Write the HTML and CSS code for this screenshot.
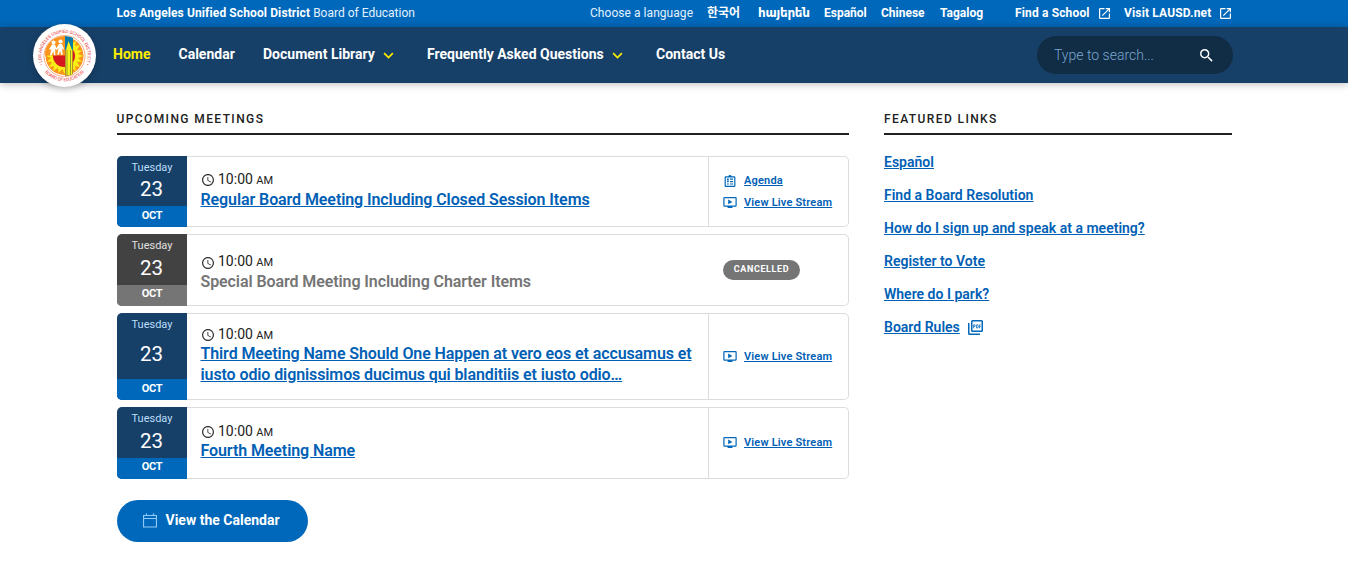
FILE: index.html
```html
<!DOCTYPE html>
<html lang="en">
<head>
<meta charset="utf-8">
<title>LAUSD Board of Education</title>
<link rel="stylesheet" href="styles.css">
</head>
<body>
<svg class="defs" aria-hidden="true">
  <symbol id="external" viewBox="3 3 18 18"><path d="M19 19H5V5h7V3H5a2 2 0 0 0-2 2v14a2 2 0 0 0 2 2h14c1.100 0 2-.9 2-2v-7h-2v7zM14 3v2h3.590l-9.830 9.830 1.410 1.410L19 6.410V10h2V3h-7z"/></symbol>
  <symbol id="chevron" viewBox="0 0 12 8"><path d="M1 1.300l5 5 5-5" fill="none" stroke="currentColor" stroke-width="1.900"/></symbol>
  <symbol id="clock" viewBox="2 2 20 20"><path d="M11.990 2C6.470 2 2 6.480 2 12s4.470 10 9.990 10C17.520 22 22 17.520 22 12S17.520 2 11.990 2zM12 20a8 8 0 1 1 0-16 8 8 0 0 1 0 16zm.5-13H11v6l5.250 3.150.75-1.230-4.500-2.670z"/></symbol>
  <symbol id="video" viewBox="1 3 22 18"><path d="M21 3H3a2 2 0 0 0-2 2v12a2 2 0 0 0 2 2h5v2h8v-2h5c1.100 0 2-.9 2-2V5a2 2 0 0 0-2-2zm0 14H3V5h18v12zm-5-6l-7 4V7z"/></symbol>
  <symbol id="agenda" viewBox="3 1 18 20"><path d="M19 3h-4.180a3 3 0 0 0-5.640 0H5a2 2 0 0 0-2 2v14a2 2 0 0 0 2 2h14a2 2 0 0 0 2-2V5a2 2 0 0 0-2-2zm0 16H5V5h14v14zM7 7h3v3H7zm5 0h5v2h-5zM7 11h3v2H7zm5 0h5v2h-5zM7 15h3v2H7zm5 0h5v2h-5z" fill-rule="evenodd"/></symbol>
  <symbol id="search" viewBox="3 3 18 18"><path d="M15.500 14h-.79l-.28-.27A6.471 6.471 0 0 0 16 9.500 6.500 6.500 0 1 0 9.500 16c1.610 0 3.090-.59 4.230-1.570l.27.28v.79l5 4.990L20.490 19l-4.990-5zm-6 0C7.010 14 5 11.990 5 9.500S7.010 5 9.500 5 14 7.010 14 9.500 11.990 14 9.500 14z"/></symbol>
  <symbol id="pdf" viewBox="2 2 20 20"><path d="M20 2H8a2 2 0 0 0-2 2v12a2 2 0 0 0 2 2h12a2 2 0 0 0 2-2V4a2 2 0 0 0-2-2zm0 14H8V4h12v12zM4 6H2v14a2 2 0 0 0 2 2h14v-2H4V6zm12 6V9a1 1 0 0 0-1-1h-2v5h2a1 1 0 0 0 1-1zm-2-3h1v3h-1V9zm4 2h1v-1h-1V9h1V8h-2v5h1zm-8 0h1a1 1 0 0 0 1-1V9a1 1 0 0 0-1-1H9v5h1v-2zm0-2h1v1h-1V9z"/></symbol>
  <symbol id="calendar" viewBox="0 0 14 15"><path d="M.5 2.500h13v11.500H.5zM.5 5.500h13M3.500 .5v2M10.500 .5v2" fill="none" stroke="currentColor" stroke-width="1.200"/></symbol>
</svg>

<header>
  <div class="topbar">
    <div class="brand"><b>Los Angeles Unified School District</b> Board of Education</div>
    <div class="choose">Choose a language</div>
    <a class="lang ko" lang="ko">한국어</a>
    <a class="lang hy" lang="hy">հայերեն</a>
    <a class="lang es">Español</a>
    <a class="lang zh">Chinese</a>
    <a class="lang tl">Tagalog</a>
    <a class="lang school">Find a School <svg><use href="#external"/></svg></a>
    <a class="lang visit">Visit LAUSD.net <svg><use href="#external"/></svg></a>
  </div>
  <nav class="mainnav">
    <a class="logo" aria-label="Los Angeles Unified School District Board of Education">
      <svg viewBox="0 0 63 63">
        <defs>
          <path id="arc-top" d="M10.900 42.500A23.100 23.100 0 1 1 52.100 42.500"/>
          <path id="arc-bottom" d="M8.900 43.800A25.800 25.800 0 0 0 54.100 43.800"/>
          <clipPath id="seal"><circle cx="31.500" cy="32" r="20"/></clipPath>
        </defs>
        <g class="ring-text">
          <text><textPath href="#arc-top" startOffset="50%" text-anchor="middle" textLength="90">• LOS ANGELES UNIFIED SCHOOL DISTRICT •</textPath></text>
          <text><textPath href="#arc-bottom" startOffset="50%" text-anchor="middle" textLength="45">BOARD OF EDUCATION</textPath></text>
        </g>
        <circle cx="31.500" cy="32" r="20.500" fill="#fff" stroke="#f59a65" stroke-width=".8"/>
        <circle cx="31.500" cy="32" r="19" fill="#fa941c"/>
        <g clip-path="url(#seal)">
          <path d="M31.500 14l2 5 4-4 .5 5 5-3-1 5 5-1-3 5 5 .5-4 3.500 5 2-5 2 4 3.500-5 .5 3 5-5-1 1 5-5-3-.5 5-4-4-2 5-2-5-4 4-.5-5-5 3 1-5-5 1 3-5-5-.5 4-3.500-5-2 5-2-4-3.500 5-.5-3-5 5 1-1-5 5 3 .5-5 4 4z" fill="#f8ef16"/>
          <circle cx="31" cy="32" r="11" fill="#d6181f"/>
          <path d="M12 12h20v19.500H12z" fill="#fa941c"/>
          <path d="M32 11h8v15h-8z" fill="#087ba7"/>
          <path d="M32 26h8v27h-8z" fill="#b58b2c"/>
          <path d="M33 26l2.500-9L39 26v25h-6z" fill="#f8f31b"/>
          <path d="M34 26v25M37.500 26v25" stroke="#7a8b2d" stroke-width=".8"/>
          <g fill="#fff"><circle cx="20.500" cy="18.500" r="2"/><circle cx="27.500" cy="17.500" r="2.100"/><path d="M19 20.500h3l2 5-1 .7-1-2 .5 7h-1.500l-.7-4-1.700 4h-1.700l1.500-6.500-1.400 1.300-.8-1zM26 20h3l2 5-1 .7-1-2 .7 7H28l-.8-4-1.500 4h-1.500l1.400-7-1.500 2-1-.6z"/></g>
        </g>
      </svg>
    </a>
    <a class="item home">Home</a>
    <a class="item cal">Calendar</a>
    <a class="item doc">Document Library <svg><use href="#chevron"/></svg></a>
    <a class="item faq">Frequently Asked Questions <svg><use href="#chevron"/></svg></a>
    <a class="item contact">Contact Us</a>
    <div class="search"><span>Type to search...</span><svg><use href="#search"/></svg></div>
  </nav>
</header>

<main>
  <section class="meetings">
    <h2>Upcoming Meetings</h2>
    <article class="meeting first">
      <div class="date"><span class="day">Tuesday</span><span class="num">23</span><span class="month">OCT</span></div>
      <div class="info"><div class="time"><svg><use href="#clock"/></svg>10:00 <small>AM</small></div><a class="title">Regular Board Meeting Including Closed Session Items</a></div>
      <div class="actions"><a><svg class="agenda"><use href="#agenda"/></svg><span>Agenda</span></a><a><svg><use href="#video"/></svg><span>View Live Stream</span></a></div>
    </article>
    <article class="meeting cancelled">
      <div class="date"><span class="day">Tuesday</span><span class="num">23</span><span class="month">OCT</span></div>
      <div class="info"><div class="time"><svg><use href="#clock"/></svg>10:00 <small>AM</small></div><span class="title">Special Board Meeting Including Charter Items</span></div>
      <div class="actions"><span class="badge">CANCELLED</span></div>
    </article>
    <article class="meeting tall">
      <div class="date"><span class="day">Tuesday</span><span class="num">23</span><span class="month">OCT</span></div>
      <div class="info"><div class="time"><svg><use href="#clock"/></svg>10:00 <small>AM</small></div><a class="title">Third Meeting Name Should One Happen at vero eos et accusamus et<br>iusto odio dignissimos ducimus qui blanditiis et iusto odio…</a></div>
      <div class="actions"><a><svg><use href="#video"/></svg><span>View Live Stream</span></a></div>
    </article>
    <article class="meeting last">
      <div class="date"><span class="day">Tuesday</span><span class="num">23</span><span class="month">OCT</span></div>
      <div class="info"><div class="time"><svg><use href="#clock"/></svg>10:00 <small>AM</small></div><a class="title">Fourth Meeting Name</a></div>
      <div class="actions"><a><svg><use href="#video"/></svg><span>View Live Stream</span></a></div>
    </article>
    <a class="button"><svg><use href="#calendar"/></svg>View the Calendar</a>
  </section>
  <aside class="links">
    <h2>Featured Links</h2>
    <ul>
      <li><a>Español</a></li>
      <li><a>Find a Board Resolution</a></li>
      <li><a>How do I sign up and speak at a meeting?</a></li>
      <li><a>Register to Vote</a></li>
      <li><a>Where do I park?</a></li>
      <li><a>Board Rules</a><svg><use href="#pdf"/></svg></li>
    </ul>
  </aside>
</main>
</body>
</html>
```
FILE: styles.css
```css
* { box-sizing: border-box; }
body {
  margin: 0;
  height: 562px;
  overflow: hidden;
  background: #fff;
  color: #212121;
  font-family: Roboto, "Noto Sans CJK KR", "DejaVu Sans", sans-serif;
}
svg { fill: currentColor; flex: none; overflow: visible; }
.defs { display: none; }

header { color: #fff; }
.topbar {
  display: flex;
  align-items: center;
  height: 27px;
  padding: 0 116px 1px 116.5px;
  background: #0068bb;
  font-size: 12px;
  line-height: 16px;
  white-space: nowrap;
}
.brand { width: 473.5px; color: #e3f2fd; }
.brand b { color: #fff; letter-spacing: .11px; }
.choose { width: 117px; color: #e3f2fd; letter-spacing: .05px; }
.lang { display: flex; align-items: center; flex: none; font-weight: 700; }
.lang svg { width: 11px; height: 11px; }
.ko { width: 51px; }
.hy { width: 66px; letter-spacing: -.25px; }
.es { width: 57px; }
.zh { width: 59px; }
.tl { width: 75px; }
.school, .visit { letter-spacing: .15px; }
.school { width: 109px; gap: 9px; }
.visit { gap: 9px; }

.mainnav {
  position: relative;
  display: flex;
  align-items: center;
  height: 56px;
  padding: 0 115px 0 113px;
  background: #174068;
  box-shadow: 0 1px 8px rgba(0, 0, 0, .28);
  font-size: 14px;
  white-space: nowrap;
}
.logo {
  position: absolute;
  left: 33px;
  top: -3px;
  width: 63px;
  height: 63px;
  border-radius: 50%;
  background: #fff;
  box-shadow: 0 2px 6px rgba(0, 0, 0, .25);
}
.logo svg { display: block; width: 63px; height: 63px; }
.ring-text { fill: #e8403c; font-size: 4.6px; }
.item { flex: none; display: flex; align-items: center; font-weight: 700; line-height: 20px; padding-bottom: 3px; }
.item svg { width: 11px; height: 7px; margin: 4px 0 0 8px; color: #ffee00; }
.home { width: 65.5px; color: #ffee00; }
.cal { width: 84.5px; }
.doc { width: 164px; }
.faq { width: 229px; }
.search {
  display: flex;
  align-items: center;
  justify-content: space-between;
  width: 196px;
  height: 38px;
  margin-left: auto;
  padding: 0 20px 0 17px;
  border-radius: 19px;
  background: #112c45;
}
.search span { color: #7ba7cf; font-weight: 300; }
.search svg { width: 13px; height: 13px; }

main { display: flex; gap: 35px; padding: 28px 116px 0; }
.meetings { width: 733px; }
.links { width: 348px; }
h2 {
  height: 24px;
  margin: 0 0 21px;
  border-bottom: 2px solid #212121;
  font-size: 12px;
  font-weight: 500;
  line-height: 16px;
  letter-spacing: 1.4px;
  text-transform: uppercase;
}
.meetings h2 { margin-left: 1px; text-indent: -.5px; }
.meeting {
  display: flex;
  width: 732px;
  height: 72px;
  margin: 0 0 7px 1px;
  border: 1px solid #dcdcdc;
  border-left: 0;
  border-radius: 5px;
}
.meeting.first { height: 71px; }
.meeting.tall { height: 87px; }
.date {
  display: flex;
  flex-direction: column;
  width: 70px;
  margin: -1px 0;
  border-radius: 5px 0 0 5px;
  overflow: hidden;
  background: #174068;
  color: #fff;
  text-align: center;
}
.day { color: #bbdefb; font-size: 11px; line-height: 14px; padding-top: 5px; }
.num { flex: 1; display: flex; align-items: center; justify-content: center; padding: 0 1px 3px 0; font-size: 20.5px; line-height: 24px; }
.month { height: 21px; background: #0068bb; font-size: 11px; font-weight: 700; line-height: 19px; letter-spacing: -.3px; }
.cancelled .date { background: #424242; }
.cancelled .day { color: #e0e0e0; }
.cancelled .month { background: #757575; }
.cancelled .month, .last .month { line-height: 17px; }
.info { flex: 1; display: flex; flex-direction: column; justify-content: center; padding: 0 0 4px 13.5px; white-space: nowrap; }
.tall .info, .last .info { padding-bottom: 4px; }
.cancelled .info { padding-top: 4px; padding-bottom: 0; }
.time { display: flex; align-items: baseline; margin-bottom: -1px; font-size: 14px; line-height: 19px; white-space: pre; }
.tall .time, .last .time { margin-bottom: -2px; }
.time svg { width: 12px; height: 12px; margin: 1px 4px 0 1.500px; align-self: center; color: #333; }
.time small { font-size: 11px; }
.title { font-size: 16px; font-weight: 600; line-height: 21px; letter-spacing: -.09px; }
.tall .title { letter-spacing: -.1px; }
.info a, .actions a span, .links a { color: #0060b5; text-decoration: underline; }
.cancelled .title { color: #757575; }
.actions {
  display: flex;
  flex-direction: column;
  justify-content: center;
  gap: 6px;
  width: 140px;
  padding-left: 14px;
  border-left: 1px solid #dcdcdc;
}
.cancelled .actions { border-color: transparent; }
.actions a { display: flex; align-items: center; height: 16px; color: #0068bb; font-size: 11px; font-weight: 600; letter-spacing: .18px; white-space: nowrap; }
.actions svg { width: 14px; height: 11px; margin-right: 7px; }
.actions svg.agenda { height: 12px; }
.last .actions { padding-bottom: 2px; }
.badge {
  width: 77px;
  height: 20px;
  border-radius: 10px;
  background: #757575;
  color: #fff;
  font-size: 9px;
  font-weight: 700;
  line-height: 18px;
  letter-spacing: .6px;
  text-align: center;
}
.button {
  display: flex;
  align-items: center;
  width: 191px;
  height: 42px;
  margin: 21px 0 0 1px;
  padding: 0 0 2px 26px;
  border-radius: 21px;
  background: #0068bb;
  color: #fff;
  font-size: 14px;
  font-weight: 700;
}
.button svg { width: 14px; height: 15px; margin: 1px 8.500px 0 0; color: #90caf9; }
.links ul { margin: -4px 0 0; padding: 0; list-style: none; }
.links li { display: flex; align-items: center; height: 20px; margin-bottom: 13px; font-size: 14px; font-weight: 600; letter-spacing: .01px; }
.links svg { width: 15px; height: 15px; margin-left: 8.500px; color: #0068bb; }
```
